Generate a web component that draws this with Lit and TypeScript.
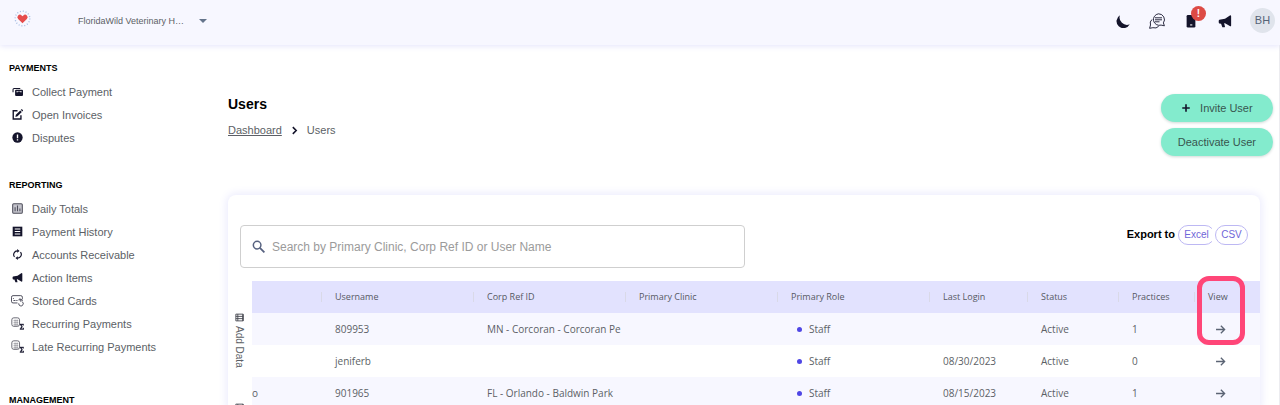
import { LitElement, html, css, svg } from "lit";
import { customElement, state } from "lit/decorators.js";

const MEGAPHONE = svg`<path d="M1.500 6.500 L8 5.500 L14 1.500 Q15 1.500 15 2.500 V13 Q15 14 14 14 L8 10.500 L7 10.600 L8 14.500 Q8 15 7.500 15 H5 L3.500 11 L1.500 10.800 Q.8 10.500 .8 8.500 Q.8 6.800 1.500 6.500Z" fill="currentColor"/>`;

const SIGMA_SHEET = svg`
  <g fill="none" stroke="#4d4d5a" stroke-width="1">
    <rect x="1" y="1" width="9.500" height="10.500" rx="2.500"/>
    <path d="M3 4.500h6M3 7h6M3 9.500h6M5 3v8M7.500 3v8" stroke-width=".5"/>
  </g>
  <path d="M11 8.500h4.500v1.800h-.8l-.4-.8h-1.500l1.400 2.400-1.500 2.500h1.800l.5-1h.8v2.100h-4.800v-.8l1.900-2.900-1.900-2.700z" fill="currentColor" stroke="currentColor" stroke-width=".4"/>`;

const ICONS: Record<string, unknown> = {
  collect: svg`
    <path d="M1.500 9V5Q1.500 3.500 3 3.500H12" fill="none" stroke="currentColor" stroke-width="1.500"/>
    <path fill-rule="evenodd" fill="currentColor" d="M6 5.500h8.500Q16 5.500 16 7V13Q16 14.500 14.500 14.500H6Q4.500 14.500 4.500 13V7Q4.500 5.500 6 5.500ZM6.500 7.500v1.500h7.500v-1.500Z"/>
    <circle cx="10.200" cy="10" r="2" fill="currentColor"/>`,
  edit: svg`
    <path d="M8 2.500H1.800V14.500H13V9" fill="none" stroke="currentColor" stroke-width="2"/>
    <path d="M5 11.500l.6-3L12 2l2.300 2.300L8 10.700ZM12.800 1.200l.8-.8q.5-.4 1 0l1.300 1.300q.4.500 0 1l-.8.8Z" fill="currentColor"/>`,
  alert: svg`
    <circle cx="8" cy="8" r="7.500" fill="currentColor"/>
    <path d="M7 3.500h2v5.500h-2zM7 10.500h2v2h-2z" fill="#fff"/>`,
  chart: svg`
    <rect x="1" y="1" width="14" height="14" rx="1.500" fill="#c3c3cb" stroke="#4d4d5a" stroke-width="1.500"/>
    <path d="M4.500 12V6M8 12V3.500M11.500 12V8" stroke="#4d4d5a" stroke-width="1.500"/>`,
  history: svg`
    <rect x="1" y="1" width="14" height="14" fill="currentColor"/>
    <path d="M4 4.500h8M4 8h8M4 11.500h8" stroke="#fff" stroke-width="1.500"/>`,
  cycle: svg`
    <g fill="none" stroke="currentColor" stroke-width="1.700">
      <path d="M3.700 11.500A5.300 5.300 0 0 1 8 2.800"/>
      <path d="M12.300 4.500A5.300 5.300 0 0 1 8 13.200"/>
    </g>
    <path d="M7.500 0l3.500 2.800-3.500 2.800zM8.500 16L5 13.200l3.500-2.800z" fill="currentColor"/>`,
  megaphone: MEGAPHONE,
  card: svg`
    <g fill="none" stroke="#3d3d4c" stroke-width="1.100">
      <path d="M8 11H2.500Q.6 11 .6 9V4Q.6 2 2.500 2H12Q14 2 14 4V6"/>
      <path d="M3 8h2.500M6.500 8H8M3 5v1"/>
      <path d="M9.500 11.500a2.800 2.800 0 1 0 4.500-1.800M10 8V6.200h2V9.500M12 7h1.800v2"/>
    </g>`,
  sigma: SIGMA_SHEET,
  moon: svg`<path d="M4.500 1.300A8.500 8.500 0 0 0 15.700 11.800A8 8 0 1 1 4.500 1.300Z" fill="currentColor"/>`,
  chat: svg`
    <g fill="none" stroke="currentColor" stroke-width=".9">
      <path d="M9.500 .8a6 5.800 0 0 1 4.900 9.100l1 2.900-3.300-.7A6 5.800 0 1 1 9.500 .8Z"/>
      <path d="M3 6.500a5 5 0 0 0-1.500 5.500L.6 15.300l3.300-.6a5.500 5.500 0 0 0 5.800-1.400"/>
      <path d="M6 4.800h7M6 6.800h7M6 8.800h4.500"/>
    </g>`,
  phone: svg`
    <path d="M4.500 1H9L13 5V14Q13 15.500 11.500 15.500H4.500Q3 15.500 3 14V2.500Q3 1 4.500 1Z" fill="currentColor"/>
    <path d="M7 12.500h2.500" stroke="#fff" stroke-width="1.200"/>`,
  search: svg`
    <circle cx="6.300" cy="6.300" r="4.700" fill="none" stroke="currentColor" stroke-width="1.800"/>
    <path d="M9.700 9.700L15.300 15.300" stroke="currentColor" stroke-width="2.200"/>`,
  plus: svg`<path d="M8 2v12M2 8h12" stroke="currentColor" stroke-width="2.600"/>`,
  chevron: svg`<path d="M5 2L11 8L5 14" fill="none" stroke="currentColor" stroke-width="2.800"/>`,
  arrow: svg`<path d="M1.500 8H14M8.500 2.500L14 8L8.500 13.500" fill="none" stroke="currentColor" stroke-width="1.900"/>`,
  grid: svg`
    <path d="M1.500 2h13v12h-13zM1.500 6h13M1.500 10h13M5 2V14" fill="none" stroke="currentColor" stroke-width="1.600"/>
    <path d="M13 2h2v12h-2z" fill="currentColor"/>`,
  logo: svg`
    <circle cx="8" cy="8" r="6.900" fill="none" stroke="#a9bfe3" stroke-width="1.300" stroke-dasharray="1 1.710"/>
    <path d="M8 12.400L3.900 8.400A2.300 2.300 0 0 1 7.200 5.100L8 5.900L8.800 5.100A2.300 2.300 0 0 1 12.100 8.400Z" fill="#e64c4c"/>`,
};

const icon = (name: string) =>
  html`<svg class="icon icon-${name}" viewBox="0 0 16 16" aria-hidden="true">${ICONS[name]}</svg>`;

interface Section {
  title: string;
  items: [string, string][];
}

const SECTIONS: Section[] = [
  {
    title: "PAYMENTS",
    items: [
      ["collect", "Collect Payment"],
      ["edit", "Open Invoices"],
      ["alert", "Disputes"],
    ],
  },
  {
    title: "REPORTING",
    items: [
      ["chart", "Daily Totals"],
      ["history", "Payment History"],
      ["cycle", "Accounts Receivable"],
      ["megaphone", "Action Items"],
      ["card", "Stored Cards"],
      ["sigma", "Recurring Payments"],
      ["sigma", "Late Recurring Payments"],
    ],
  },
  { title: "MANAGEMENT", items: [] },
];

const COLUMNS = [
  "",
  "Username",
  "Corp Ref ID",
  "Primary Clinic",
  "Primary Role",
  "Last Login",
  "Status",
  "Practices",
  "View",
];

interface User {
  lead: string;
  username: string;
  corp: string;
  clinic: string;
  role: string;
  login: string;
  status: string;
  practices: number;
}

const USERS: User[] = [
  { lead: "", username: "809953", corp: "MN - Corcoran - Corcoran Pe", clinic: "", role: "Staff", login: "", status: "Active", practices: 1 },
  { lead: "", username: "jeniferb", corp: "", clinic: "", role: "Staff", login: "08/30/2023", status: "Active", practices: 0 },
  { lead: "o", username: "901965", corp: "FL - Orlando - Baldwin Park", clinic: "", role: "Staff", login: "08/15/2023", status: "Active", practices: 1 },
];

@customElement("app-root")
export class AppRoot extends LitElement {
  @state() private query = "";

  static styles = css`
    :host {
      display: grid;
      grid-template-rows: auto minmax(0, 1fr);
      height: 100vh;
      overflow: hidden;
      background: #fff;
      color: #5c5f66;
      font: 11px/16px "Liberation Sans", Arial, sans-serif;
    }
    * { box-sizing: border-box; }
    button, input, select { font: inherit; color: inherit; margin: 0; }
    button { cursor: pointer; border: 0; background: none; padding: 0; }
    .icon { width: 10px; height: 10px; display: block; flex: none; color: #14142b; }

    .topbar {
      display: flex;
      align-items: center;
      height: 45px;
      padding: 0 5px 4px 14px;
      background: #f7f7ff;
      box-shadow: 0 1px 6px #e3e3fb;
      z-index: 1;
    }
    .icon-logo { width: 17px; height: 17px; margin-bottom: 4px; }
    .practice { display: flex; align-items: center; margin-left: 47px; }
    .practice select {
      appearance: none;
      width: 132px;
      height: 24px;
      padding: 0 16px 0 0;
      border: 0;
      background: none;
      font-size: 9px;
      color: #5c5f66;
    }
    .caret {
      width: 0;
      margin-left: -11px;
      border: 4px solid transparent;
      border-top-color: #64748b;
      border-bottom: 0;
      pointer-events: none;
    }
    .tools { display: flex; align-items: center; margin-left: auto; gap: 20px; }
    .tool { position: relative; }
    .tool .icon { width: 14px; height: 14px; }
    .tool .icon-chat { width: 16px; height: 16px; margin: 0 -1px; }
    .badge {
      position: absolute;
      left: 7px;
      top: -8px;
      width: 15px;
      height: 15px;
      border-radius: 50%;
      background: #dd4b45;
      color: #fff;
      font: bold 10px/15px "Liberation Sans", Arial, sans-serif;
      text-align: center;
    }
    .avatar {
      width: 25px;
      height: 25px;
      border-radius: 50%;
      background: #e0e4ec;
      color: #566377;
      text-align: center;
      line-height: 25px;
      margin-left: -2px;
    }

    .shell { display: grid; grid-template-columns: 212px minmax(0, 1fr); min-height: 0; }
    .sidebar { padding: 16px 9px 0; display: flex; flex-direction: column; gap: 29px; overflow: hidden; }
    .section { flex: none; }
    .section h2 { margin: 0 0 5px; font-size: 9px; line-height: 14px; color: #000; }
    .section ul { list-style: none; margin: 0; padding: 0; }
    .section:nth-child(2) { padding-bottom: 6px; }
    .item { display: flex; align-items: center; gap: 9px; height: 23px; padding-left: 3px; color: #5c5f66; text-decoration: none; }
    .item .icon { width: 11px; height: 11px; }
    .item .icon-sigma, .item .icon-card { width: 13px; height: 13px; margin: 0 -1px; }

    .content { padding-left: 16px; border-right: 1px solid #ececf0; overflow: hidden; }
    .head { display: flex; justify-content: space-between; padding: 49px 6px 0 0; }
    .head h1 { margin: 1px 0 9px; font-size: 14px; line-height: 18px; color: #000; }
    .crumbs { display: flex; align-items: center; gap: 8px; }
    .crumbs a { color: #5c5f66; }
    .crumbs .icon { width: 9px; height: 9px; }
    .actions { display: flex; flex-direction: column; gap: 6px; }
    .pill {
      display: flex;
      align-items: center;
      justify-content: center;
      gap: 9px;
      height: 28px;
      padding: 0 17px;
      border-radius: 14px;
      background: #83ebcd;
      color: #38564f;
      box-shadow: 0 1px 3px #cfd8d6;
    }

    .panel {
      margin: 39px 19px 0 0;
      border-radius: 8px;
      background: #fff;
      box-shadow: 0 0 8px 2px #ececfd;
    }
    .bar { display: flex; justify-content: space-between; align-items: flex-start; padding: 30px 12px 13px; }
    .search {
      display: flex;
      align-items: center;
      gap: 7px;
      width: 505px;
      height: 43px;
      padding: 0 11px;
      border: 1px solid #cfcfcf;
      border-radius: 4px;
    }
    .search .icon { width: 13px; height: 13px; color: #56617f; }
    .search input { flex: 1; border: 0; outline: 0; padding: 0; background: none; font-size: 12px; }
    .search input::placeholder { color: #9b9b9b; opacity: 1; }
    .export { display: flex; align-items: center; color: #000; font-weight: bold; }
    .export span { margin: -3px 3px 0 0; }
    .clip { width: 34px; margin-right: 3px; overflow: hidden; }
    .chip {
      display: block;
      height: 20px;
      width: 33px;
      border: 1px solid #bdb8f3;
      border-radius: 10px;
      color: #6f66d8;
      font-size: 10px;
      line-height: 16px;
      font-weight: normal;
    }
    .clip .chip { width: 37px; }

    .body { position: relative; display: grid; grid-template-columns: 24px minmax(0, 1fr); align-items: start; }
    .rail { display: flex; flex-direction: column; align-items: center; gap: 35px; padding: 32px 2px 0 0; }
    .rail button { display: flex; writing-mode: vertical-rl; align-items: center; gap: 4px; line-height: 12px; color: #5c5f66; font-size: 10px; }
    .rail .icon { width: 9px; height: 9px; color: #44464f; }
    table {
      width: 100%;
      table-layout: fixed;
      border-collapse: collapse;
      font-family: "Open Sans", "Noto Sans", sans-serif;
      font-size: 10px;
      color: #5c5f66;
    }
    th, td { height: 32px; padding: 0 0 0 14px; text-align: left; font-weight: normal; white-space: nowrap; }
    th { font-size: 9px; background: #e2e2fe; color: #565963; }
    th:not(:first-child) {
      background: linear-gradient(#d9d9e8, #d9d9e8) 0 50% / 1px 10px no-repeat #e2e2fe;
    }
    tbody tr:nth-child(odd) { background: #f7f7ff; }
    td:first-child { padding: 0; }
    .c0 { width: 69px; }
    .c5 { width: 98px; }
    .c6 { width: 91px; }
    .c7 { width: 76px; }
    .c8 { width: 66px; }
    .role { display: flex; align-items: center; gap: 7px; padding-left: 6px; }
    .dot { width: 5px; height: 5px; border-radius: 50%; background: #4f46e5; }
    .open { display: block; padding-left: 7px; }
    .open .icon { width: 11px; height: 11px; color: #5b6474; }
    .marker {
      position: absolute;
      right: 15px;
      top: -5px;
      width: 48px;
      height: 69px;
      border: 5px solid #ff4678;
      border-radius: 12px;
      pointer-events: none;
    }
  `;

  private onSearch(e: Event) {
    this.query = (e.target as HTMLInputElement).value;
  }

  private get rows() {
    const q = this.query.toLowerCase();
    return USERS.filter((u) => `${u.username} ${u.corp} ${u.clinic}`.toLowerCase().includes(q));
  }

  render() {
    return html`
      <header class="topbar">
        ${icon("logo")}
        <div class="practice">
          <select aria-label="Practice">
            <option>FloridaWild Veterinary H…</option>
          </select>
          <span class="caret"></span>
        </div>
        <div class="tools">
          <button class="tool" aria-label="Dark mode">${icon("moon")}</button>
          <button class="tool" aria-label="Messages">${icon("chat")}</button>
          <button class="tool" aria-label="Devices">${icon("phone")}<span class="badge">!</span></button>
          <button class="tool" aria-label="Announcements">${icon("megaphone")}</button>
          <button class="avatar" aria-label="Account BH">BH</button>
        </div>
      </header>
      <div class="shell">
        <nav class="sidebar">
          ${SECTIONS.map(
            (s) => html`
              <div class="section">
                <h2>${s.title}</h2>
                <ul>
                  ${s.items.map(([i, label]) => html`<li><a class="item" href="#">${icon(i)}${label}</a></li>`)}
                </ul>
              </div>
            `,
          )}
        </nav>
        <main class="content">
          <div class="head">
            <div>
              <h1>Users</h1>
              <nav class="crumbs" aria-label="Breadcrumb">
                <a href="#">Dashboard</a>${icon("chevron")}<span>Users</span>
              </nav>
            </div>
            <div class="actions">
              <button class="pill">${icon("plus")}Invite User</button>
              <button class="pill">Deactivate User</button>
            </div>
          </div>
          <section class="panel">
            <div class="bar">
              <label class="search">
                ${icon("search")}
                <input
                  type="text"
                  aria-label="Search users"
                  placeholder="Search by Primary Clinic, Corp Ref ID or User Name"
                  .value=${this.query}
                  @input=${this.onSearch}
                />
              </label>
              <div class="export">
                <span>Export to</span>
                <div class="clip"><button class="chip">Excel</button></div>
                <button class="chip">CSV</button>
              </div>
            </div>
            <div class="body">
              <div class="rail">
                <button>${icon("grid")}Add Data</button>
                <button aria-label="Columns">${icon("grid")}</button>
              </div>
              <table>
                <thead>
                  <tr>
                    ${COLUMNS.map((c, i) => html`<th class="c${i}" scope="col">${c}</th>`)}
                  </tr>
                </thead>
                <tbody>
                  ${this.rows.map(
                    (u) => html`
                      <tr>
                        <td>${u.lead}</td>
                        <td>${u.username}</td>
                        <td>${u.corp}</td>
                        <td>${u.clinic}</td>
                        <td><span class="role"><i class="dot"></i>${u.role}</span></td>
                        <td>${u.login}</td>
                        <td>${u.status}</td>
                        <td>${u.practices}</td>
                        <td><a class="open" href="#" aria-label="View ${u.username}">${icon("arrow")}</a></td>
                      </tr>
                    `,
                  )}
                </tbody>
              </table>
              <div class="marker"></div>
            </div>
          </section>
        </main>
      </div>
    `;
  }
}
